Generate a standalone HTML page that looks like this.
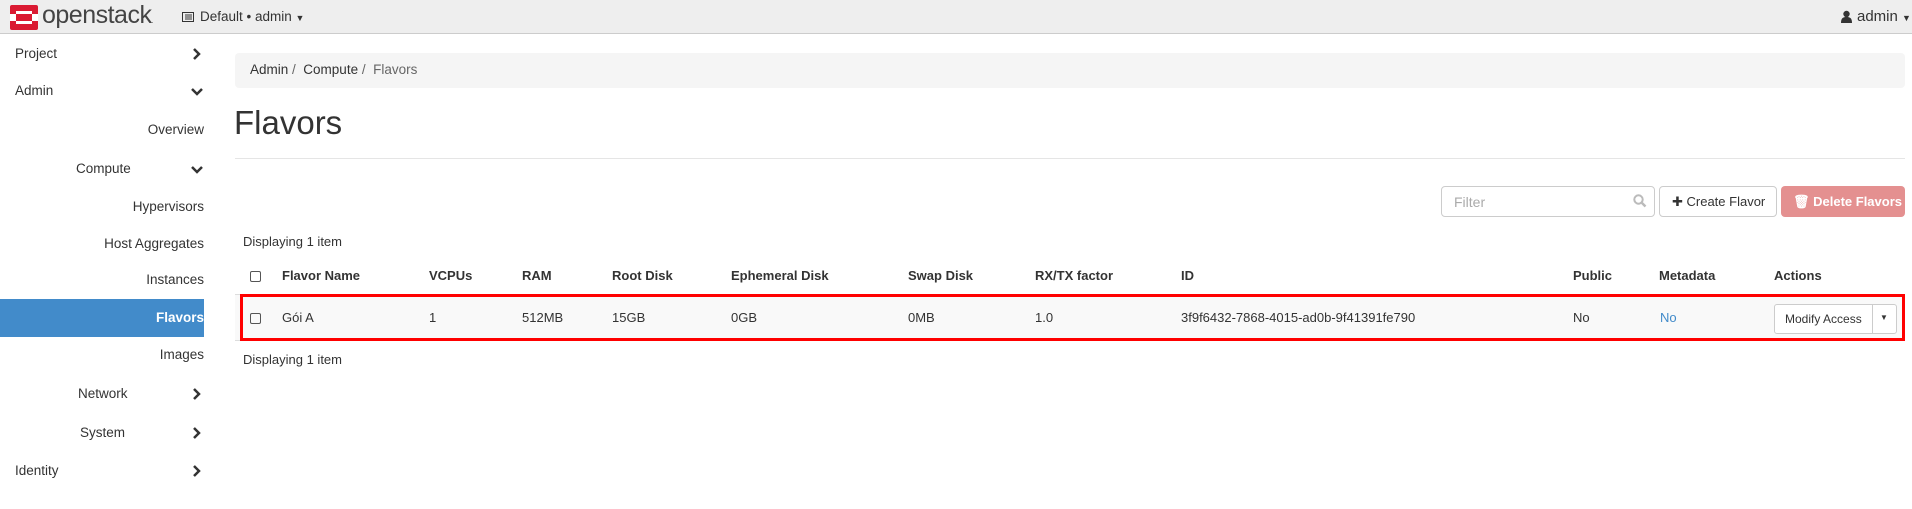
<!DOCTYPE html>
<html><head><meta charset="utf-8"><style>
*{box-sizing:border-box;margin:0;padding:0}
body{width:1912px;height:509px;overflow:hidden;background:#fff;font-family:"Liberation Sans",sans-serif;font-size:13px;color:#333;position:relative}
.abs{position:absolute;white-space:nowrap}
.top{position:absolute;left:0;top:0;width:1912px;height:34px;background:#eee;border-bottom:1px solid #ccc}
.side{position:absolute;left:0;width:204px;height:38px;line-height:38px;font-size:13.5px}
.hd{position:absolute;top:266px;font-weight:bold;font-size:13px;line-height:20px}
.rw{position:absolute;top:308px;font-size:13px;line-height:20px}
.cb{position:absolute;width:11px;height:11px;border:1px solid #555;border-radius:2px}
</style></head><body>
<div class="top"></div>
<svg class="abs" style="left:10px;top:5px" width="28" height="25" viewBox="0 0 28 25">
<rect x="0" y="0" width="28" height="25" rx="2" fill="#da1a32"/>
<rect x="6" y="6" width="16" height="13" fill="#fff"/>
<rect x="0" y="9" width="6" height="7" fill="#fff"/>
<rect x="22" y="9" width="6" height="7" fill="#fff"/>
<rect x="6" y="9" width="16" height="7" fill="#da1a32"/>
</svg>
<div class="abs" style="left:42px;top:1px;font-size:25px;color:#444;letter-spacing:-0.5px">openstack<span style="font-size:7px">.</span></div>
<svg class="abs" style="left:182px;top:12px" width="12" height="10"><rect x="0.5" y="0.5" width="11" height="9" fill="none" stroke="#333"/><path d="M3 3h7M3 5h7M3 7h7" stroke="#333"/></svg>
<div class="abs" style="left:200px;top:9px;font-size:13.5px">Default • admin <span style="font-size:9px">▼</span></div>
<svg class="abs" style="left:1841px;top:10px" width="11" height="13"><circle cx="5.5" cy="4" r="3.2" fill="#333"/><path d="M0 13c0-5 2-6 5.5-6s5.5 1 5.5 6z" fill="#333"/></svg>
<div class="abs" style="left:1857px;top:8px;font-size:15px">admin <span style="font-size:9px">▼</span></div>

<div class="side" style="top:35px;left:15px">Project</div>
<div class="side" style="top:72px;left:15px">Admin</div>
<div class="side" style="top:111px"><span style="position:absolute;right:0">Overview</span></div>
<div class="side" style="top:150px;left:76px">Compute</div>
<div class="side" style="top:188px"><span style="position:absolute;right:0">Hypervisors</span></div>
<div class="side" style="top:225px"><span style="position:absolute;right:0">Host Aggregates</span></div>
<div class="side" style="top:261px"><span style="position:absolute;right:0">Instances</span></div>
<div class="side" style="top:299px;background:#428bca;color:#fff;font-weight:bold"><span style="position:absolute;right:0">Flavors</span></div>
<div class="side" style="top:336px"><span style="position:absolute;right:0">Images</span></div>
<div class="side" style="top:375px;left:78px">Network</div>
<div class="side" style="top:414px;left:80px">System</div>
<div class="side" style="top:452px;left:15px">Identity</div>
<svg class="abs" style="left:192px;top:48px" width="10" height="12"><path d="M2 1l5 5-5 5" fill="none" stroke="#333" stroke-width="2.5"/></svg>
<svg class="abs" style="left:191px;top:87px" width="12" height="10"><path d="M1 2l5 5 5-5" fill="none" stroke="#333" stroke-width="2.5"/></svg>
<svg class="abs" style="left:191px;top:165px" width="12" height="10"><path d="M1 2l5 5 5-5" fill="none" stroke="#333" stroke-width="2.5"/></svg>
<svg class="abs" style="left:192px;top:388px" width="10" height="12"><path d="M2 1l5 5-5 5" fill="none" stroke="#333" stroke-width="2.5"/></svg>
<svg class="abs" style="left:192px;top:427px" width="10" height="12"><path d="M2 1l5 5-5 5" fill="none" stroke="#333" stroke-width="2.5"/></svg>
<svg class="abs" style="left:192px;top:465px" width="10" height="12"><path d="M2 1l5 5-5 5" fill="none" stroke="#333" stroke-width="2.5"/></svg>

<div class="abs" style="left:235px;top:53px;width:1670px;height:35px;background:#f5f5f5;border-radius:4px"></div>
<div class="abs" style="left:250px;top:62px;font-size:13.5px">Admin <span style="color:#666">/</span>&nbsp; Compute <span style="color:#666">/</span>&nbsp; <span style="color:#666">Flavors</span></div>
<div class="abs" style="left:234px;top:104px;font-size:33px;color:#333">Flavors</div>
<div class="abs" style="left:235px;top:158px;width:1670px;height:1px;background:#e5e5e5"></div>

<div class="abs" style="left:1441px;top:186px;width:214px;height:31px;border:1px solid #ccc;border-radius:4px"></div>
<div class="abs" style="left:1454px;top:194px;color:#aaa;font-size:14px">Filter</div>
<svg class="abs" style="left:1633px;top:194px" width="14" height="14"><circle cx="5.5" cy="5.5" r="4.2" fill="none" stroke="#bbb" stroke-width="2"/><path d="M8.5 8.5l4 4" stroke="#bbb" stroke-width="2.5"/></svg>
<div class="abs" style="left:1659px;top:186px;width:118px;height:31px;border:1px solid #ccc;border-radius:4px;background:#fff;font-size:13px;line-height:29px;padding-left:12px">✚ Create Flavor</div>
<div class="abs" style="left:1781px;top:186px;width:124px;height:31px;border-radius:4px;background:#e49090;color:#fff;font-size:13px;line-height:31px;padding-left:12px;font-weight:bold">🗑 Delete Flavors</div>

<div class="abs" style="left:243px;top:234px;font-size:13px">Displaying 1 item</div>
<div class="cb" style="left:250px;top:271px"></div>
<div class="hd" style="left:282px">Flavor Name</div>
<div class="hd" style="left:429px">VCPUs</div>
<div class="hd" style="left:522px">RAM</div>
<div class="hd" style="left:612px">Root Disk</div>
<div class="hd" style="left:731px">Ephemeral Disk</div>
<div class="hd" style="left:908px">Swap Disk</div>
<div class="hd" style="left:1035px">RX/TX factor</div>
<div class="hd" style="left:1181px">ID</div>
<div class="hd" style="left:1573px">Public</div>
<div class="hd" style="left:1659px">Metadata</div>
<div class="hd" style="left:1774px">Actions</div>

<div class="abs" style="left:235px;top:294px;width:1670px;height:47px;background:#f9f9f9;border-top:1px solid #ddd;border-bottom:1px solid #ddd"></div>
<div class="abs" style="left:240px;top:294px;width:1665px;height:47px;border:3px solid #f00"></div>
<div class="cb" style="left:250px;top:313px"></div>
<div class="rw" style="left:282px">Gói A</div>
<div class="rw" style="left:429px">1</div>
<div class="rw" style="left:522px">512MB</div>
<div class="rw" style="left:612px">15GB</div>
<div class="rw" style="left:731px">0GB</div>
<div class="rw" style="left:908px">0MB</div>
<div class="rw" style="left:1035px">1.0</div>
<div class="rw" style="left:1181px">3f9f6432-7868-4015-ad0b-9f41391fe790</div>
<div class="rw" style="left:1573px">No</div>
<div class="rw" style="left:1660px;color:#428bca">No</div>
<div class="abs" style="left:1774px;top:304px;width:123px;height:30px;border:1px solid #ccc;border-radius:3px;background:#fff"></div>
<div class="abs" style="left:1872px;top:304px;width:1px;height:30px;background:#ccc"></div>
<div class="abs" style="left:1785px;top:312px;font-size:12px">Modify Access</div>
<div class="abs" style="left:1880px;top:313px;font-size:8px">▼</div>

<div class="abs" style="left:243px;top:352px;font-size:13px">Displaying 1 item</div>
</body></html>
